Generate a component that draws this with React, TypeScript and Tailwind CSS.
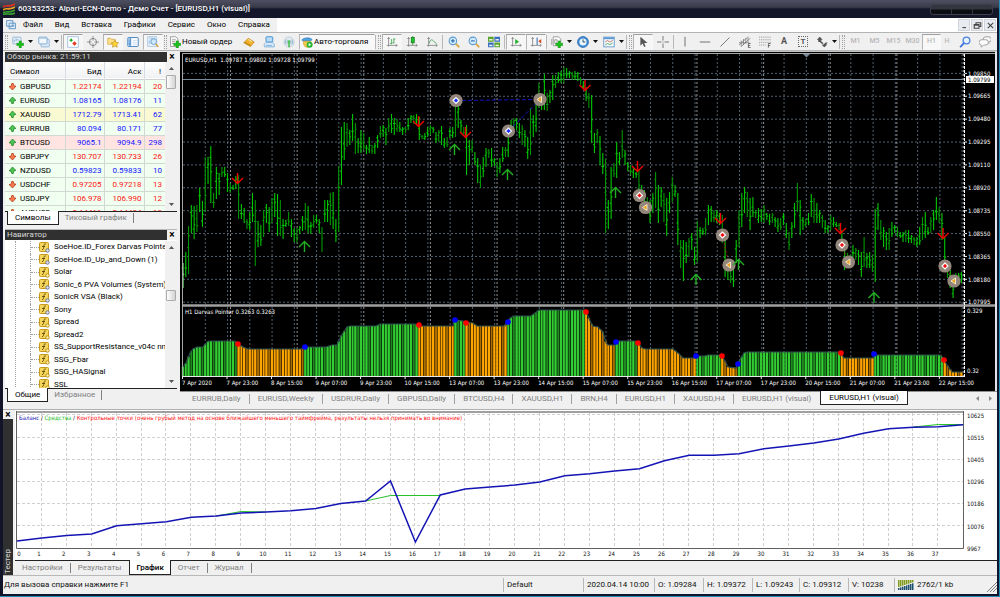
import type { ReactNode } from 'react';

type Quote = { symbol: string; bid: string; ask: string; spread: string; up: boolean; row?: string };

const QUOTES: Quote[] = [
  { symbol: 'GBPUSD', bid: '1.22174', ask: '1.22194', spread: '20', up: false },
  { symbol: 'EURUSD', bid: '1.08165', ask: '1.08176', spread: '11', up: true },
  { symbol: 'XAUUSD', bid: '1712.79', ask: '1713.41', spread: '62', up: true, row: 'bg-[#fafad2]' },
  { symbol: 'EURRUB', bid: '80.094', ask: '80.171', spread: '77', up: true },
  { symbol: 'BTCUSD', bid: '9065.1', ask: '9094.9', spread: '298', up: true, row: 'bg-[#ffe4e1]' },
  { symbol: 'GBPJPY', bid: '130.707', ask: '130.733', spread: '26', up: false },
  { symbol: 'NZDUSD', bid: '0.59823', ask: '0.59833', spread: '10', up: true },
  { symbol: 'USDCHF', bid: '0.97205', ask: '0.97218', spread: '13', up: false },
  { symbol: 'USDJPY', bid: '106.978', ask: '106.990', spread: '12', up: false },
  { symbol: 'AUDUSD', bid: '0.64411', ask: '0.64424', spread: '13', up: false },
];

const INDICATORS = [
  { name: 'SoeHoe.ID_Forex Darvas Pointer', grey: true },
  { name: 'SoeHoe.ID_Up_and_Down (1)', grey: true },
  { name: 'Solar', grey: false },
  { name: 'Sonic_6 PVA Volumes (System)', grey: true },
  { name: 'SonicR VSA (Black)', grey: true },
  { name: 'Sony', grey: true },
  { name: 'Spread', grey: false },
  { name: 'Spread2', grey: false },
  { name: 'SS_SupportResistance_v04c nmc', grey: false },
  { name: 'SSG_Fbar', grey: false },
  { name: 'SSG_HASignal', grey: false },
  { name: 'SSL', grey: false },
];

const CHART_TABS = [
  'EURRUB,Daily', 'EURUSD,Weekly', 'USDRUR,Daily', 'GBPUSD,Daily', 'BTCUSD,H4', 'XAUUSD,H1',
  'BRN,H4', 'EURUSD,H1', 'XAUUSD,H4', 'EURUSD,H1 (visual)', 'EURUSD,H1 (visual)',
];

const PRICES = [
  '1.09850', '1.09665', '1.09480', '1.09295', '1.09110', '1.08920', '1.08735', '1.08550',
  '1.08365', '1.08180', '1.07995',
];

const DATES = [
  '7 Apr 2020', '7 Apr 23:00', '8 Apr 15:00', '9 Apr 07:00', '9 Apr 23:00', '10 Apr 15:00',
  '13 Apr 07:00', '13 Apr 23:00', '14 Apr 15:00', '15 Apr 07:00', '15 Apr 23:00', '16 Apr 15:00',
  '17 Apr 07:00', '17 Apr 23:00', '20 Apr 15:00', '21 Apr 07:00', '21 Apr 23:00', '22 Apr 15:00',
];

// high / low of every H1 bar, in chart pixels
const BARS = `263-288 252-277 226-274 205-233 206-239 205-232 188-212 201-227 157-212 157-184
146-203 193-208 167-199 173-195 167-177 167-177 173-192 183-193 185-190 176-189
175-219 204-219 208-223 219-229 212-230 193-222 200-266 221-247 225-246 210-237
204-223 207-232 198-223 193-217 194-236 200-236 219-239 220-227 212-226 219-237
228-242 228-243 226-234 216-231 203-230 206-233 222-234 215-228 215-223 219-233
227-252 200-222 200-222 193-225 192-229 219-242 166-232 127-185 122-160 123-147
130-145 114-141 123-154 138-153 130-153 133-150 145-154 137-153 145-154 143-154
135-148 126-138 125-137 128-145 118-132 114-133 118-135 119-132 122-132 127-135
127-133 118-130 115-123 115-124 114-124 117-140 135-139 133-140 127-137 125-135
127-133 132-143 130-142 126-145 138-148 137-147 128-138 127-138 97-137 102-128
120-133 127-136 125-175 140-165 140-153 152-165 158-183 165-188 157-177 148-167
149-158 148-167 158-166 162-177 158-173 147-162 147-157 128-157 120-132 118-128
118-130 123-138 125-145 130-147 137-159 108-155 115-137 105-132 83-108 95-110
74-110 93-111 90-103 75-100 75-88 72-83 71-83 67-83 68-78 71-78
72-80 71-80 72-81 77-85 81-89 87-101 93-108 95-143 133-153 129-143
136-165 153-174 159-233 200-229 167-219 163-177 142-178 152-165 130-158 150-165
162-171 165-175 167-178 172-178 169-197 185-200 190-203 197-210 200-223 193-213
172-208 185-223 187-207 193-222 198-236 192-213 177-202 185-197 193-245 240-268
240-281 242-263 238-257 233-250 247-265 221-262 227-238 228-235 218-235 205-225
206-222 210-222 210-223 213-225 215-243 237-277 263-280 270-283 267-287 240-263
210-247 193-227 187-213 192-217 198-230 197-217 210-218 208-223 209-222 205-223
213-220 214-225 213-223 217-227 218-232 218-230 213-225 223-238 232-250 222-238
203-228 183-212 200-235 217-230 219-227 213-225 194-217 198-223 203-223 210-223
215-228 220-233 225-233 215-230 217-227 222-227 223-230 230-250 250-270 253-268
255-265 245-257 248-260 250-265 252-277 237-267 253-268 252-268 255-272 209-282
203-230 220-240 227-247 232-250 228-250 222-237 225-233 227-237 232-238 232-242
230-242 230-243 235-243 237-245 237-247 227-245 217-240 212-238 227-235 217-233
210-230 197-220 207-223 213-240 237-272 263-278 270-288 280-298 273-283 273-285 272-283`
  .split(/\s+/)
  .map((b) => b.split('-').map(Number));

// outline of the Darvas histogram: x, top
const OUTLINE = [
  [182, 368], [186, 363], [190, 353], [193, 349], [197, 347], [203, 347], [207, 342], [209, 341],
  [235, 341], [238, 344], [245, 348], [248, 349], [302, 349], [304, 347], [326, 347], [332, 345],
  [337, 345], [341, 336], [347, 327], [350, 326], [376, 326], [380, 324], [415, 324], [421, 326],
  [453, 326], [454, 320], [463, 321], [466, 322], [473, 323], [477, 326], [505, 326], [507, 321],
  [513, 316], [531, 316], [539, 310], [585, 310], [588, 316], [590, 321], [593, 326], [598, 327],
  [603, 332], [606, 343], [608, 345], [615, 345], [617, 341], [635, 341], [638, 343], [642, 348],
  [645, 349], [673, 349], [678, 353], [683, 358], [695, 358], [697, 356], [705, 356], [708, 355],
  [721, 355], [725, 361], [728, 367], [736, 368], [738, 363], [744, 353], [747, 352], [838, 352],
  [841, 354], [844, 358], [873, 358], [875, 355], [941, 355], [945, 362], [952, 372], [965, 372],
];

// x of every trend change, green first
const TURNS = [238, 304, 418, 454, 466, 507, 585, 616, 638, 696, 722, 738, 841, 874, 944];

const RED_DOTS = [[238, 344], [419, 325], [466, 323], [586, 312], [638, 343], [722, 356], [841, 353], [944, 360]];
const BLUE_DOTS = [[305, 347], [455, 320], [508, 322], [616, 342], [696, 356], [738, 364], [874, 354]];

const SELL_ARROWS = [[237.5, 184], [418.5, 127], [465.5, 138], [585, 91], [637.5, 172], [720.5, 224], [840.5, 234], [943, 239]];
const BUY_ARROWS = [[304.5, 241], [454.5, 144], [507.5, 169], [615.5, 187], [696, 274], [738.5, 259], [874, 292]];

const TRADES = [
  { x: 456, y: 100.5, fill: '#1a2cff', kind: 'open' },
  { x: 508.5, y: 131, fill: '#1a2cff', kind: 'open' },
  { x: 540, y: 99.5, fill: '#e8a21c', kind: 'close' },
  { x: 639.5, y: 195.5, fill: '#f01010', kind: 'open' },
  { x: 645.5, y: 207.5, fill: '#e8a21c', kind: 'close' },
  { x: 722.5, y: 235, fill: '#f01010', kind: 'open' },
  { x: 729, y: 265, fill: '#e8a21c', kind: 'close' },
  { x: 842, y: 245, fill: '#f01010', kind: 'open' },
  { x: 848.5, y: 262, fill: '#e8a21c', kind: 'close' },
  { x: 945, y: 266, fill: '#f01010', kind: 'open' },
  { x: 954, y: 281, fill: '#e8a21c', kind: 'close' },
];

const BALANCE = [
  541, 538, 535.5, 534, 525.7, 523.7, 521.7, 517.3, 516, 513, 512, 510.7, 508.5, 503.5, 501, 481,
  542, 495, 489, 487, 485, 482, 475.7, 473.7, 471, 468.7, 460.7, 455.3, 455.3, 453.7, 448.7, 446,
  443, 439, 433.3, 428.7, 427.3, 426.7, 424.7,
];

const BAR_STEP = 2.78;
const SMALL = "font-['DejaVu_Sans_Condensed','DejaVu_Sans',sans-serif] text-[6px]";

function outlineTop(x: number) {
  const i = OUTLINE.findIndex((p) => p[0] >= x);
  if (i <= 0) return OUTLINE[0][1];
  const [x0, y0] = OUTLINE[i - 1];
  const [x1, y1] = OUTLINE[i];
  return y0 + ((y1 - y0) * (x - x0)) / (x1 - x0);
}

/* ---------- icons ---------- */

function Icon({ children }: { children: ReactNode }) {
  return (
    <svg viewBox="0 0 16 16" className="size-3 shrink-0" fill="none" aria-hidden="true">
      {children}
    </svg>
  );
}

const plus = <path d="M9.500 6.500h3v3.200h3.200v3h-3.200v3.200h-3v-3.200H6.300v-3h3.200z" fill="#18c018" stroke="#0b8a12" strokeWidth=".6" />;
const axes = <path d="M3.500 2v12M1 12.500h14M2 4l1.500-2L5 4M13 11l2 1.500-2 1.500" stroke="#777" />;

const icons: Record<string, ReactNode> = {
  newChart: (
    <>
      <rect x="1" y="1.500" width="11" height="9" rx="1" fill="#e8f1fa" stroke="#7fa9d0" />
      <path d="M3 8V5M5.500 7V3M8 6V4" stroke="#6a98c4" />
      {plus}
    </>
  ),
  profiles: (
    <>
      <rect x="4" y="4.500" width="11" height="10" rx="1" fill="#dbe8f5" stroke="#7fa9d0" />
      <rect x="1" y="1.500" width="11" height="9" rx="1" fill="#f2f7fc" stroke="#6a9ac8" />
      <path d="M1 3h11" stroke="#8fb6da" />
    </>
  ),
  market: (
    <>
      <rect x="1" y="1" width="14" height="14" fill="#fff" stroke="#8eb6dc" />
      <path d="M5.500 3l2.500 2.500L5.500 8 3 5.500z" fill="#1fae2a" />
      <path d="M10 7l3 3-3 3-3-3z" fill="#e5381c" />
    </>
  ),
  target: (
    <>
      <circle cx="8" cy="8" r="4.800" stroke="#888" strokeWidth="1.300" />
      <path d="M8 0v6M8 10v6M0 8h6M10 8h6" stroke="#888" strokeWidth="1.200" />
    </>
  ),
  favorites: (
    <>
      <path d="M1 3h4l1 1.500h5V11H1z" fill="#ffe28a" stroke="#d0a840" />
      <path d="M10.500 5.500l1.600 3.100 3.400.5-2.500 2.400.6 3.500-3.100-1.700L7.400 15l.6-3.500-2.500-2.400 3.400-.5z" fill="#ffd83a" stroke="#b98310" strokeWidth=".8" />
    </>
  ),
  dataWindow: (
    <>
      <rect x="1" y="2" width="14" height="12" rx="1" fill="#f6fafe" stroke="#4d88c4" strokeWidth="1.300" />
      <path d="M2 3h3.500v10H2z" fill="#5d9ad6" />
      <path d="M3 5h1M3 8h1" stroke="#fff" />
      <path d="M8 6h5M8 8.500h5M8 11h5" stroke="#c8d8e8" />
    </>
  ),
  tester: (
    <>
      <rect x="1" y="1" width="12" height="13" fill="#e9f3fb" stroke="#9fc0e0" />
      <path d="M3 11V6M5.500 10V4M3 3h8" stroke="#8db2d6" />
      <circle cx="9" cy="7.500" r="3.800" fill="#cfe8fa" stroke="#6a9cc8" strokeWidth="1.200" />
      <path d="M11.800 10.500L15 14.500" stroke="#d39a2a" strokeWidth="1.800" />
    </>
  ),
  order: (
    <>
      <path d="M2 1h7l3 3v10H2z" fill="#fafafa" stroke="#8a8a8a" />
      <path d="M4 5h5M4 7.500h4M4 10h3" stroke="#888" />
      {plus}
    </>
  ),
  editor: (
    <>
      <path d="M1 9l6-6 8 5-5 6z" fill="#f3b32a" stroke="#b98a2a" />
      <path d="M1 9l9 5v-2.500L2.500 7.500z" fill="#c98c1a" />
      <path d="M7 4.500l5 3.200" stroke="#fde6a0" strokeWidth="1.500" />
    </>
  ),
  terminal: (
    <>
      <rect x="4" y="1" width="9" height="7" rx="1" fill="#b9dcf8" stroke="#4a92d0" strokeWidth="1.300" />
      <path d="M1.500 11L4 8.500h9l2 2.500v3.500h-13z" fill="#d9e9f8" stroke="#6aa4d8" />
      <path d="M4 12.500h8" stroke="#6aa4d8" />
    </>
  ),
  signal: (
    <>
      <circle cx="8" cy="8" r="6.800" fill="#e2eaf0" stroke="#b9c8d4" />
      <path d="M4.500 11.500a5 5 0 0 1 0-7M11.500 4.500a5 5 0 0 1 0 7M6 10a3 3 0 0 1 0-4M10 6a3 3 0 0 1 0 4" stroke="#7ea6c4" />
      <path d="M8 8v7" stroke="#3cb844" strokeWidth="2" />
      <circle cx="8" cy="7.500" r="1.800" fill="#50c458" />
    </>
  ),
  auto: (
    <>
      <path d="M1 5.500C3 2 12 1 15 5l-3 2H4z" fill="#4ea3e0" stroke="#2a70ac" strokeWidth=".7" />
      <path d="M3 7c0 5 2 8 5 8s5-3 5-8z" fill="#f7c948" stroke="#c28e1c" strokeWidth=".7" />
      <circle cx="11.500" cy="11.500" r="4" fill="#22b52e" />
      <path d="M10.200 9.300v4.400l3.500-2.200z" fill="#fff" />
    </>
  ),
  bars: <>{axes}<path d="M7.500 4v7M10.500 3v7M7.500 10h-2M10.500 4h2M10.500 9h-2" stroke="#4aa858" strokeWidth="1.200" /></>,
  candles: <>{axes}<path d="M9 0v12" stroke="#16871e" /><rect x="7" y="2" width="4" height="7" fill="#1ec42c" stroke="#117a1a" /></>,
  line: <>{axes}<path d="M4 10c2-6 4-6 6-3l4 3" stroke="#4aa858" strokeWidth="1.200" /></>,
  zoomIn: (
    <>
      <path d="M10 10l5 5" stroke="#d9b050" strokeWidth="2.600" />
      <circle cx="6.500" cy="6.500" r="5" fill="#d3ebfc" stroke="#5a9cd0" strokeWidth="1.400" />
      <path d="M6.500 4v5M4 6.500h5" stroke="#2d72b4" strokeWidth="1.500" />
    </>
  ),
  zoomOut: (
    <>
      <path d="M10 10l5 5" stroke="#d9b050" strokeWidth="2.600" />
      <circle cx="6.500" cy="6.500" r="5" fill="#d3ebfc" stroke="#5a9cd0" strokeWidth="1.400" />
      <path d="M4 6.500h5" stroke="#2d72b4" strokeWidth="1.500" />
    </>
  ),
  tile: (
    <>
      <path d="M0 1h7.500v6.500H0zM8.500 8.500H16V15H8.500z" fill="#5aa42c" />
      <path d="M8.500 1H16v6.500H8.500zM0 8.500h7.500V15H0z" fill="#3a6ec0" />
      <path d="M1.500 4h4.500v2H1.500zM10 4h4.500v2H10zM1.500 11.500h4.500v2H1.500zM10 11.500h4.500v2H10z" fill="#e9f5e4" />
    </>
  ),
  scroll: <>{axes}<path d="M7 4l5 3.500L7 11z" fill="#1fae2a" /></>,
  shift: <>{axes}<path d="M9.500 2v10" stroke="#3a6fb0" strokeWidth="1.400" /><path d="M15 4v6l-4-3z" fill="#d9481c" /></>,
  indicators: (
    <>
      <path d="M3 1h7l3 3v9H3z" fill="#fafafa" stroke="#8a8a8a" />
      <path d="M1 4v8M5 5v5h3V5z" stroke="#888" />
      {plus}
    </>
  ),
  clock: (
    <>
      <circle cx="8" cy="8" r="7.300" fill="#3c88d4" stroke="#2a68ac" />
      <circle cx="8" cy="8" r="4.800" fill="#eaf4fd" />
      <path d="M8 4.500V8h3" stroke="#245" strokeWidth="1.200" />
    </>
  ),
  template: (
    <>
      <rect x="1" y="1.500" width="14" height="13" fill="#f4f9fe" stroke="#6a9ac8" strokeWidth="1.200" />
      <path d="M1 3h14" stroke="#5a98d4" strokeWidth="2.500" />
      <path d="M3 8l3-2 3 2 4-2" stroke="#b0543a" />
      <path d="M3 12l3-2 3 1.500 4-2" stroke="#2a9d3a" />
    </>
  ),
  cursor: <path d="M4.500 1v12l3-3 2 4.500 2-1-2-4.300H14z" fill="#555" />,
  cross: <path d="M8 0v6M8 10v6M0 8h6M10 8h6M8 7.500v1" stroke="#777" strokeWidth="1.300" />,
  vline: <path d="M8 1v13" stroke="#777" strokeWidth="1.400" />,
  hline: <path d="M1 8h14" stroke="#777" strokeWidth="1.400" />,
  trend: <path d="M2 14L14 2" stroke="#777" strokeWidth="1.300" />,
  channel: (
    <>
      <path d="M0 12L11 2M3 14L15 3M3 6v8M6 4v8M9 3v7M12 1v7M0 9h14" stroke="#777" />
      <path d="M15.500 10h-3v5.500h3M12.500 12.700h2.500" stroke="#444" />
    </>
  ),
  fibo: (
    <>
      <path d="M0 1.500h16M0 5h16M0 8.500h16M0 12h10" stroke="#888" strokeDasharray="1.500 1" />
      <path d="M15.500 10h-3v5.500M12.500 12.700h2.500" stroke="#444" />
    </>
  ),
  arrows: (
    <>
      <path d="M5 1l4 4H7v2l3 2.500-1.500 1.500L5 8H3V5H1z" fill="#555" />
      <path d="M11 15l-3.500-3.500h2L13 8.500h2.500l-2 3H15z" fill="#555" />
    </>
  ),
  search: (
    <>
      <circle cx="10" cy="6" r="4.500" fill="#e6f0ff" stroke="#4a80e0" strokeWidth="1.700" />
      <path d="M6.500 9.500L1.500 15" stroke="#3a6fd8" strokeWidth="2.400" />
    </>
  ),
  chat: (
    <>
      <path d="M9 1h4a3 3 0 0 1 0 7v2l-2-2H9a3.500 3.500 0 0 1 0-7z" fill="#f4f4f4" stroke="#8a8a8a" />
      <path d="M4 5h5a3 3 0 0 1 0 7H6l-3 3v-3a3.500 3.500 0 0 1 1-7z" fill="#fff" stroke="#8a8a8a" />
    </>
  ),
};

/* ---------- toolbar pieces ---------- */

function Tool({ icon, label, pressed, menu }: { icon: string; label: string; pressed?: boolean; menu?: boolean }) {
  return (
    <button
      aria-label={label}
      className={`flex h-4 shrink-0 items-center justify-center ${menu ? 'w-[26px] gap-1' : 'w-5'} ${
        pressed ? 'border border-[#f8f8f8] border-t-[#a0a0a0] border-l-[#b4b4b4] bg-[#f6f6f6]' : ''
      }`}
    >
      <Icon>{icons[icon]}</Icon>
      {menu && <Caret />}
    </button>
  );
}

function Caret() {
  return (
    <svg viewBox="0 0 5 3" className="h-[3px] w-[5px] shrink-0" aria-hidden="true">
      <path d="M0 0h5L2.500 3z" fill="#111" />
    </svg>
  );
}

function Grip() {
  return <span className="mx-px h-[14px] w-[3px] shrink-0 border-x border-dotted border-[#a0a0a0]" />;
}

function Sep() {
  return <span className="mr-px h-[14px] w-px shrink-0 bg-[#b8b8b8]" />;
}

function Toolbar() {
  return (
    <div className="flex h-[19px] items-center border-y border-[#b4b4b4] bg-[#f0f0f0] pr-0.5 pl-px text-[8px]">
      <Grip />
      <Tool icon="newChart" label="Новый график" menu />
      <Tool icon="profiles" label="Профили" menu />
      <Sep />
      <Tool icon="market" label="Обзор рынка" pressed />
      <Tool icon="target" label="Прицел" />
      <Tool icon="favorites" label="Навигатор" pressed />
      <Tool icon="dataWindow" label="Окно данных" />
      <Tool icon="tester" label="Тестер стратегий" pressed />
      <Grip />
      <button className="flex h-4 w-[71px] shrink-0 items-center gap-px pl-px whitespace-nowrap">
        <Icon>{icons.order}</Icon>
        Новый ордер
      </button>
      <Tool icon="editor" label="MetaEditor" />
      <Tool icon="terminal" label="Терминал" />
      <Tool icon="signal" label="Сигналы" />
      <button className="flex h-4 w-[76px] shrink-0 items-center gap-px border border-[#f8f8f8] border-t-[#a0a0a0] border-l-[#b4b4b4] bg-[#f8f8f8] pl-px whitespace-nowrap">
        <Icon>{icons.auto}</Icon>
        Авто-торговля
      </button>
      <Sep />
      <Grip />
      <Tool icon="bars" label="Бары" pressed />
      <Tool icon="candles" label="Свечи" />
      <Tool icon="line" label="Линия" />
      <Sep />
      <Tool icon="zoomIn" label="Увеличить" />
      <Tool icon="zoomOut" label="Уменьшить" />
      <Tool icon="tile" label="Расположить окна" />
      <Sep />
      <Tool icon="scroll" label="Автопрокрутка" pressed />
      <Tool icon="shift" label="Сдвиг графика" pressed />
      <Sep />
      <Tool icon="indicators" label="Индикаторы" menu />
      <Tool icon="clock" label="Периоды" menu />
      <Tool icon="template" label="Шаблоны" menu />
      <Sep />
      <Grip />
      <Tool icon="cursor" label="Курсор" pressed />
      <Tool icon="cross" label="Перекрестие" />
      <Sep />
      <Tool icon="vline" label="Вертикальная линия" />
      <Tool icon="hline" label="Горизонтальная линия" />
      <Tool icon="trend" label="Трендовая линия" />
      <Tool icon="channel" label="Канал" />
      <Tool icon="fibo" label="Линии Фибоначчи" />
      <button className="h-4 w-[18px] shrink-0 text-center text-[9px] font-bold text-[#555]">A</button>
      <button className="flex h-4 w-5 shrink-0 items-center justify-center" aria-label="Текстовая метка">
        <span className="border border-dotted border-[#666] px-0.5 text-[8px] leading-[9px] font-bold text-[#555]">T</span>
      </button>
      <Tool icon="arrows" label="Стрелки" menu />
      <Sep />
      <Grip />
      <div className="flex shrink-0 items-center text-[7px] font-medium text-[#b8b8b8]">
        {['M1', 'M5', 'M15', 'M30', 'H1'].map((tf) => (
          <button
            key={tf}
            className={`h-4 w-[19px] shrink-0 text-center ${
              tf === 'H1' ? 'border border-[#f8f8f8] border-t-[#a0a0a0] border-l-[#b4b4b4] bg-[#f8f8f8]' : ''
            }`}
          >
            {tf}
          </button>
        ))}
        <button className="h-4 w-3 shrink-0 text-center">H</button>
      </div>
      <div className="ml-auto flex shrink-0">
        <Tool icon="search" label="Поиск" />
        <Tool icon="chat" label="Чат" />
      </div>
    </div>
  );
}

/* ---------- side panels ---------- */

function PanelTitle({ children }: { children: ReactNode }) {
  return (
    <div className="flex h-[10px] items-center bg-[#f0f0f0] text-[8px] leading-[10px]">
      <h2 className="flex-1 bg-[#303030] pl-0.5 text-[#d8d8d8]">{children}</h2>
      <button className="w-[10px] text-center text-[10px] font-bold text-black" aria-label="Закрыть">
        ×
      </button>
    </div>
  );
}

function Scrollbar({ thumb }: { thumb: string }) {
  return (
    <div className="relative flex w-3 shrink-0 flex-col items-center justify-between bg-[#f0f0f0] py-[5px]">
      <svg viewBox="0 0 5 3" className="h-[3px] w-[5px]"><path d="M0 3h5L2.500 0z" fill="#555" /></svg>
      <span className={`absolute inset-x-px rounded-[1px] border border-[#aaa] bg-gradient-to-r from-white to-[#d4d4d4] ${thumb}`} />
      <svg viewBox="0 0 5 3" className="h-[3px] w-[5px]"><path d="M0 0h5L2.500 3z" fill="#555" /></svg>
    </div>
  );
}

function PanelTabs({ active, other }: { active: string; other: string }) {
  return (
    <div className="flex h-[15px] items-start border-t border-[#222] bg-[#f0f0f0] pl-0.5 text-[8px] leading-[12px]">
      <button className="-mt-px h-[14px] border border-t-0 border-[#222] bg-white px-[7px] text-black">{active}</button>
      <button className="px-[6px] text-[#808080]">{other}</button>
      <span className="mt-px h-[10px] w-px bg-[#808080]" />
    </div>
  );
}

function MarketWatch() {
  return (
    <section className="mt-px">
      <PanelTitle>Обзор рынка: 21:59:11</PanelTitle>
      <div className="flex h-[149px] overflow-hidden bg-white">
        <table className="h-min min-w-0 flex-1 table-fixed border-collapse text-[8px] leading-[11px]">
          <colgroup>
            <col className="w-[60px]" />
            <col className="w-[39px]" />
            <col className="w-[40px]" />
            <col className="w-[21px]" />
          </colgroup>
          <thead>
            <tr className="h-[17px] border-b border-[#d0d0d0] bg-gradient-to-b from-white to-[#f0f1f3]">
              <th className="border-r border-[#d8dde4] p-0 pt-0.5 pl-[5px] text-left font-normal">Символ</th>
              <th className="border-r border-[#d8dde4] p-0 pt-0.5 pr-0.5 text-right font-normal">Бид</th>
              <th className="border-r border-[#d8dde4] p-0 pt-0.5 pr-0.5 text-right font-normal">Аск</th>
              <th className="p-0 pt-0.5 pr-1 text-right font-normal">!</th>
            </tr>
          </thead>
          <tbody>
            {QUOTES.map((q) => (
              <tr key={q.symbol} className={`h-[14px] border-b border-[#d2d8d2] ${q.row ?? 'bg-[#f0fff0]'}`}>
                <td className="border-r border-[#d2d8d2] p-0">
                  <span className="flex items-center gap-1 pl-1">
                    <svg viewBox="0 0 8 8" className="size-[7px] shrink-0">
                      {q.up ? (
                        <path d="M4 0l4 4H6L4.500 8h-1L2 4.500H0z" fill="#4cc454" stroke="#167a1c" strokeWidth=".8" />
                      ) : (
                        <path d="M4 8L0 4h2L3.500 0h1L6 3.500h2z" fill="#f87850" stroke="#a8300e" strokeWidth=".8" />
                      )}
                    </svg>
                    {q.symbol}
                  </span>
                </td>
                <td className={`border-r border-[#d2d8d2] p-0 pr-0.5 text-right ${q.up ? 'text-[#1414ff]' : 'text-[#ff1414]'}`}>{q.bid}</td>
                <td className={`border-r border-[#d2d8d2] p-0 pr-0.5 text-right ${q.up ? 'text-[#1414ff]' : 'text-[#ff1414]'}`}>{q.ask}</td>
                <td className={`p-0 pr-[3px] text-right ${q.up ? 'text-[#1414ff]' : 'text-[#ff1414]'}`}>{q.spread}</td>
              </tr>
            ))}
          </tbody>
        </table>
        <Scrollbar thumb="top-[13px] h-[14px]" />
      </div>
      <PanelTabs active="Символы" other="Тиковый график" />
    </section>
  );
}

function Navigator() {
  return (
    <section className="mt-[3px] border-t border-[#b8b8b8]">
      <PanelTitle>Навигатор</PanelTitle>
      <div className="flex h-[148px] overflow-hidden bg-white pt-px">
        <ul className="ml-[10px] flex h-[150px] min-w-0 flex-1 flex-col overflow-hidden border-l border-dotted border-[#a0a0a0] pl-[14px] text-[8px]">
          {INDICATORS.map((item) => (
            <li key={item.name} className="flex flex-1 items-center border-l border-dotted border-[#a0a0a0] leading-[12px] whitespace-nowrap">
              <span className="w-2 shrink-0 border-t border-dotted border-[#a0a0a0]" />
              <svg viewBox="0 0 11 11" className="size-[11px] shrink-0">
                <rect x=".5" y=".5" width="9" height="9" rx="1" fill="#f6d65a" stroke="#c59a1c" />
                <path d="M6.800 2C5 1.500 5 3 4.800 4.500S4.500 8 3 7.500M3 4.500h3" stroke="#5a4508" fill="none" strokeWidth=".9" />
                <circle cx="8.500" cy="8.500" r="1.700" fill={item.grey ? '#dfe3ee' : '#fff3b0'} stroke={item.grey ? '#6a7490' : '#b98c10'} />
              </svg>
              <span className="pl-1">{item.name}</span>
            </li>
          ))}
        </ul>
        <Scrollbar thumb="top-[49px] h-[11px]" />
      </div>
      <PanelTabs active="Общие" other="Избранное" />
    </section>
  );
}

/* ---------- price chart ---------- */

function PriceChart() {
  const gridX = Array.from({ length: 35 }, (_, i) => 205.3 + i * 22.26);
  const dayX = Array.from({ length: 12 }, (_, i) => 230.5 + i * 66.64);
  return (
    <svg viewBox="180 52 815 339" className="block h-auto w-full bg-black" role="img" aria-label="EURUSD,H1">
      <g stroke="#66788a" strokeWidth=".8" strokeDasharray="2 2">
        {gridX.map((x) => (
          <path key={x} d={`M${x} 54V304M${x} 307V376`} />
        ))}
        {PRICES.map((p, i) => (
          <path key={p} d={`M183 ${73.4 + i * 22.88}H965`} />
        ))}
      </g>
      <g stroke="#b4b4b4" strokeWidth=".8" strokeDasharray="2 2">
        {dayX.map((x) => (
          <path key={x} d={`M${x} 54V304M${x} 307V376`} />
        ))}
      </g>
      <path d="M183 79.500H965" stroke="#778899" />
      <path d="M803 54h7l-3.500 3.500z" fill="#778899" />

      {BARS.map(([hi, lo], i) => {
        const x = 183 + i * BAR_STEP;
        const open = hi + (lo - hi) * (0.2 + ((i * 7) % 10) / 16);
        const close = hi + (lo - hi) * (0.2 + ((i * 3 + 4) % 10) / 16);
        return (
          <path
            key={i}
            d={`M${x} ${hi}V${lo}M${x - 1.3} ${open}H${x}M${x} ${close}h1.300`}
            stroke={i === 0 ? '#7dff7d' : i % 3 === 2 ? '#009600' : '#00c800'}
            strokeWidth="1.100"
          />
        );
      })}

      <g stroke="#1a1af0" strokeWidth=".8" strokeDasharray="4 2">
        <path d="M456 100.500L540 99.500" />
        <path d="M508.500 131L540 99.500" />
      </g>
      <g stroke="#d01818" strokeWidth=".8" strokeDasharray="2 2">
        <path d="M639.500 195.500L645.500 207.500M722.500 235L729 265M842 245L848.500 262M945 266L954 281" />
      </g>
      {TRADES.map((t) => (
        <g key={t.x}>
          <circle cx={t.x} cy={t.y} r="6.600" fill="#93877c" />
          {t.kind === 'open' ? (
            <path d={`M${t.x - 3} ${t.y}l3-3 3 3-3 3z`} fill={t.fill} stroke="#fff" strokeWidth="1.100" />
          ) : (
            <path d={`M${t.x - 3} ${t.y}l4.500-3v6z`} fill={t.fill} stroke="#f4e6c8" />
          )}
        </g>
      ))}
      {SELL_ARROWS.map(([x, y]) => (
        <path key={x} d={`M${x} ${y - 11}v10M${x - 5.500} ${y - 6}l5.500 5.500 5.500-5.500`} fill="none" stroke="#f00000" strokeWidth="1.400" />
      ))}
      {BUY_ARROWS.map(([x, y]) => (
        <path key={x} d={`M${x} ${y + 11}v-10M${x - 5.500} ${y + 6}l5.500-5.500 5.500 5.500`} fill="none" stroke="#22b022" strokeWidth="1.400" />
      ))}

      {BARS.map((_, i) => {
        const x = 183 + i * BAR_STEP;
        const green = TURNS.filter((t) => x >= t - 0.5).length % 2 === 0;
        return (
          <path
            key={i}
            d={`M${x} ${outlineTop(x)}V376`}
            stroke={green ? (i % 4 === 3 ? '#1f8a1f' : '#32cd32') : i % 4 === 3 ? '#a86c00' : '#ffa500'}
            strokeWidth={i % 2 ? 2 : 2.4}
          />
        );
      })}
      <polyline points={OUTLINE.map((p) => p.join(',')).join(' ')} fill="none" stroke="#2f4f4f" strokeWidth="1.200" />
      {RED_DOTS.map(([x, y]) => (
        <circle key={x} cx={x} cy={y} r="2.800" fill="#ff0000" />
      ))}
      {BLUE_DOTS.map(([x, y]) => (
        <circle key={x} cx={x} cy={y} r="2.800" fill="#0000ff" />
      ))}

      {/* frame and axes */}
      <path d="M182.500 376V53.500H995" fill="none" stroke="#a8a8a8" />
      <path d="M182 305.500H995" stroke="#a0a0a0" strokeWidth="2.400" />
      <path d="M182 376.500H965" stroke="#e8e8e8" />
      <path d="M964.500 54V376" stroke="#fff" strokeDasharray="3 1" />
      <g className={SMALL} fill="#fff">
        <text x="185" y="62">EURUSD,H1&nbsp; 1.09787 1.09802 1.09728 1.09799</text>
        <text x="185" y="314">H1 Darvas Pointer 0.3263 0.3263</text>
        {PRICES.map((p, i) => (
          <text key={p} x="968" y={75.6 + i * 22.88}>{p}</text>
        ))}
        <text x="967" y="313">0.329</text>
        <text x="967" y="373">0.32</text>
        {DATES.map((d, i) => (
          <text key={d} x={182 + i * 44.52} y="385">{d}</text>
        ))}
      </g>
      <rect x="966" y="76" width="28" height="7" fill="#fff" />
      <text x="968" y="82" className={SMALL} fill="#000">1.09799</text>
      <path d={DATES.map((_, i) => `M${182.5 + i * 44.52} 376v3`).join('') + PRICES.map((_, i) => `M965 ${73.4 + i * 22.88}h2`).join('')} stroke="#e8e8e8" />
    </svg>
  );
}

function ChartTabs() {
  return (
    <div className="flex h-[15px] items-start border-t border-[#909090] bg-[#f0f0f0] pl-1 text-[8px] leading-[13px] whitespace-nowrap text-[#808080]">
      {CHART_TABS.map((tab, i) =>
        i === CHART_TABS.length - 1 ? (
          <button key={i} className="-mt-px h-[14px] border border-t-0 border-[#222] bg-white px-2 text-black">{tab}</button>
        ) : (
          <button key={i} className="flex items-center pl-2">
            {tab}
            <span className={`ml-2 h-[10px] w-px ${i === 9 ? '' : 'bg-[#a0a0a0]'}`} />
          </button>
        ),
      )}
      <span className="ml-auto flex gap-2 pt-[4px] pr-1">
        <svg viewBox="0 0 3 5" className="h-[5px] w-[5px]"><path d="M3 0v5L0 2.500z" fill="#888" /></svg>
        <svg viewBox="0 0 3 5" className="h-[5px] w-[5px]"><path d="M0 0v5l3-2.500z" fill="#888" /></svg>
      </span>
    </div>
  );
}

/* ---------- strategy tester ---------- */

function BalanceChart() {
  const at = (i: number) => 17 + i * 24.9;
  return (
    <svg viewBox="15 410 982 150" className="block h-auto w-full bg-white" role="img" aria-label="Баланс">
      <g stroke="#d0d0d0" strokeDasharray="3 2">
        {BALANCE.slice(1, 38).map((_, i) => (
          <path key={i} d={`M${Math.round(at(i + 1)) - 0.5} 413V548`} />
        ))}
        {[414.5, 437.5, 459.5, 481.5, 503.5, 525.5].map((y) => (
          <path key={y} d={`M17 ${y}H963`} />
        ))}
      </g>
      <path d="M16 412H964" stroke="#a0a0a0" strokeWidth="2" />
      <path d="M16.500 411V548.500H963.500V411" fill="none" stroke="#606060" />
      <g fill="none" stroke="#28c028">
        <path d={`M${at(8)} 516L${at(9)} 511.500L${at(10)} 512`} />
        <path d={`M${at(14)} 501L${at(15)} 495.500H${at(17)}`} />
        <path d={`M${at(36)} 427L${at(37)} 424.500H${at(38)}`} />
      </g>
      <polyline points={BALANCE.map((y, i) => `${at(i)},${y}`).join(' ')} fill="none" stroke="#1414b4" strokeWidth="1.500" />
      <g className={SMALL} fill="#111">
        {BALANCE.slice(0, 38).map((_, i) => (
          <text key={i} x={i === 0 ? 19 : at(i) - 3} y="556" textAnchor="middle">{i}</text>
        ))}
        {['10625', '10515', '10405', '10296', '10186', '10076', '9967'].map((v, i) => (
          <text key={v} x="967" y={417.5 + i * 22.2}>{v}</text>
        ))}
        <text x="19" y="420">
          <tspan fill="#1414b4">Баланс</tspan> / <tspan fill="#28c028">Средства</tspan> /{' '}
          <tspan fill="#ff1414">
            Контрольные точки (очень грубый метод на основе ближайшего меньшего таймфрейма, результаты нельзя принимать во внимание)
          </tspan>
        </text>
      </g>
    </svg>
  );
}

function Tester() {
  const tabs = ['Настройки', 'Результаты', 'График', 'Отчет', 'Журнал'];
  return (
    <section className="flex border-t border-[#b0b0b0] bg-[#f0f0f0]">
      <div className="flex w-[10px] shrink-0 flex-col">
        <button className="h-[9px] text-center text-[10px] leading-[8px] font-bold" aria-label="Закрыть">×</button>
        <h2 className="flex flex-1 rotate-180 items-center bg-[#303030] pt-px text-[8px] leading-[10px] text-[#d8d8d8] [writing-mode:vertical-rl]">
          Тестер
        </h2>
      </div>
      <div className="min-w-0 flex-1 pl-0.5">
        <BalanceChart />
        <div className="flex h-[15px] items-start border-t border-[#222] text-[8px] leading-[13px] text-[#808080]">
          {tabs.map((tab) =>
            tab === 'График' ? (
              <button key={tab} className="-mt-px h-[15px] border border-t-0 border-[#222] bg-white px-[6px] font-medium text-black">{tab}</button>
            ) : (
              <button key={tab} className="flex items-center pl-[7px]">
                {tab}
                <span className={`ml-[7px] h-[10px] w-px ${tab === 'Результаты' ? '' : 'bg-[#808080]'}`} />
              </button>
            ),
          )}
        </div>
      </div>
    </section>
  );
}

function StatusBar() {
  const cell = 'flex h-[14px] shrink-0 items-center border-l border-[#b8b8b8] pl-[3px]';
  return (
    <footer className="flex h-[19px] items-center border-t border-[#b8b8b8] bg-[#f0f0f0] text-[8px] whitespace-nowrap text-[#111]">
      <span className="flex-1 pl-px">Для вызова справки нажмите F1</span>
      <span className={`${cell} w-[80px]`}>Default</span>
      <span className={`${cell} w-[71px]`}>2020.04.14 10:00</span>
      <span className={`${cell} w-[49px]`}>O: 1.09284</span>
      <span className={`${cell} w-[49px]`}>H: 1.09372</span>
      <span className={`${cell} w-[47px]`}>L: 1.09243</span>
      <span className={`${cell} w-[49px]`}>C: 1.09312</span>
      <span className={`${cell} w-[46px]`}>V: 10238</span>
      <span className={`${cell} w-[103px] gap-[3px]`}>
        <svg viewBox="0 0 16 10" className="h-[10px] w-4">
          {[0, 2, 4, 6, 8, 10, 12, 14].map((x) => (
            <g key={x}>
              <rect x={x} y="0" width="1.500" height={7 - x / 3} fill="#7f9a1c" />
              <rect x={x} y={8 - x / 3} width="1.500" height={2 + x / 3} fill="#1f5070" />
            </g>
          ))}
        </svg>
        2762/1 kb
        <svg viewBox="0 0 10 10" className="mt-auto ml-auto size-[10px]">
          <path d="M0 10L10 0M3 10l7-7M6 10l4-4" stroke="#808080" />
        </svg>
      </span>
    </footer>
  );
}

export default function App() {
  return (
    <div className="min-h-screen border-r border-b border-[#2090b8] bg-[#12152a] font-['Roboto','Noto_Sans',sans-serif] text-black">
      <header className="flex h-[18px] items-center bg-linear-to-b from-[#4c4e60] from-5% via-[#393b49] via-40% to-[#14172a] to-50% pr-1.5 pl-[3px] text-[8px] font-medium text-white">
        <svg viewBox="0 0 12 12" className="size-3" fill="none" strokeWidth="1.600">
          <path d="M0 4c4-3 6 1 12-3" stroke="#e03020" />
          <path d="M0 7c4-3 6 1 12-3" stroke="#e8a020" />
          <path d="M0 10c4-3 6 1 12-3M0 12c4-3 6 1 12-2" stroke="#38a030" />
        </svg>
        <h1 className="pl-[3px]">60353253: Alpari-ECN-Demo - Демо Счет - [EURUSD,H1 (visual)]</h1>
        <div className="ml-auto flex h-[11px] w-[63px] overflow-hidden rounded-[3px] border border-[#3c3e4c] bg-linear-to-b from-[#34363f] from-45% to-[#0c0d12] to-55%">
          <button className="w-[21px] border-r border-[#33353f]" aria-label="Свернуть" />
          <button className="w-[21px] border-r border-[#33353f]" aria-label="Развернуть" />
          <button className="flex-1" aria-label="Закрыть" />
        </div>
      </header>

      <div className="mr-0.5 ml-[3px] bg-[#f0f0f0]">
        <nav className="flex h-[14px] items-center bg-white text-[8px]">
          <div className="flex h-full items-center gap-3 bg-[#f0f0f0] pr-[7px] pl-[3px]">
            <svg viewBox="0 0 16 16" className="-mr-[5px] size-[10px]" fill="#e8f1fa" stroke="#5b8fc2" strokeWidth="1.500">
              <path d="M1 1h10v9H1zM5 5h10v9H5z" />
              <path d="M7 12l2-3 2 2 2-3" />
            </svg>
            {['Файл', 'Вид', 'Вставка', 'Графики', 'Сервис', 'Окно', 'Справка'].map((m) => (
              <button key={m}>{m}</button>
            ))}
          </div>
          <div className="ml-auto flex gap-px pr-px">
            {['M4 11h6', 'M5 5V3h8v6h-2M2 6h8v6H2zM2 7h8', 'M3 3l9 9M12 3l-9 9'].map((d) => (
              <button key={d} className="flex h-3 w-[12px] items-center justify-center border border-[#d0d4da] bg-[#e8ebef]" aria-label="Окно графика">
                <svg viewBox="0 0 15 15" className="size-[9px]" fill="none" stroke="#444" strokeWidth="1.800"><path d={d} /></svg>
              </button>
            ))}
          </div>
        </nav>
        <Toolbar />
        <main className="flex">
          <aside className="w-[177px] shrink-0 pr-[3px] pl-0.5">
            <MarketWatch />
            <Navigator />
          </aside>
          <div className="min-w-0 flex-1">
            <div className="border-t border-r-2 border-[#e0e4e8] border-t-[#c0c4c4]">
              <PriceChart />
            </div>
            <ChartTabs />
          </div>
        </main>
        <div className="h-[3px]" />
        <Tester />
        <StatusBar />
      </div>
    </div>
  );
}
